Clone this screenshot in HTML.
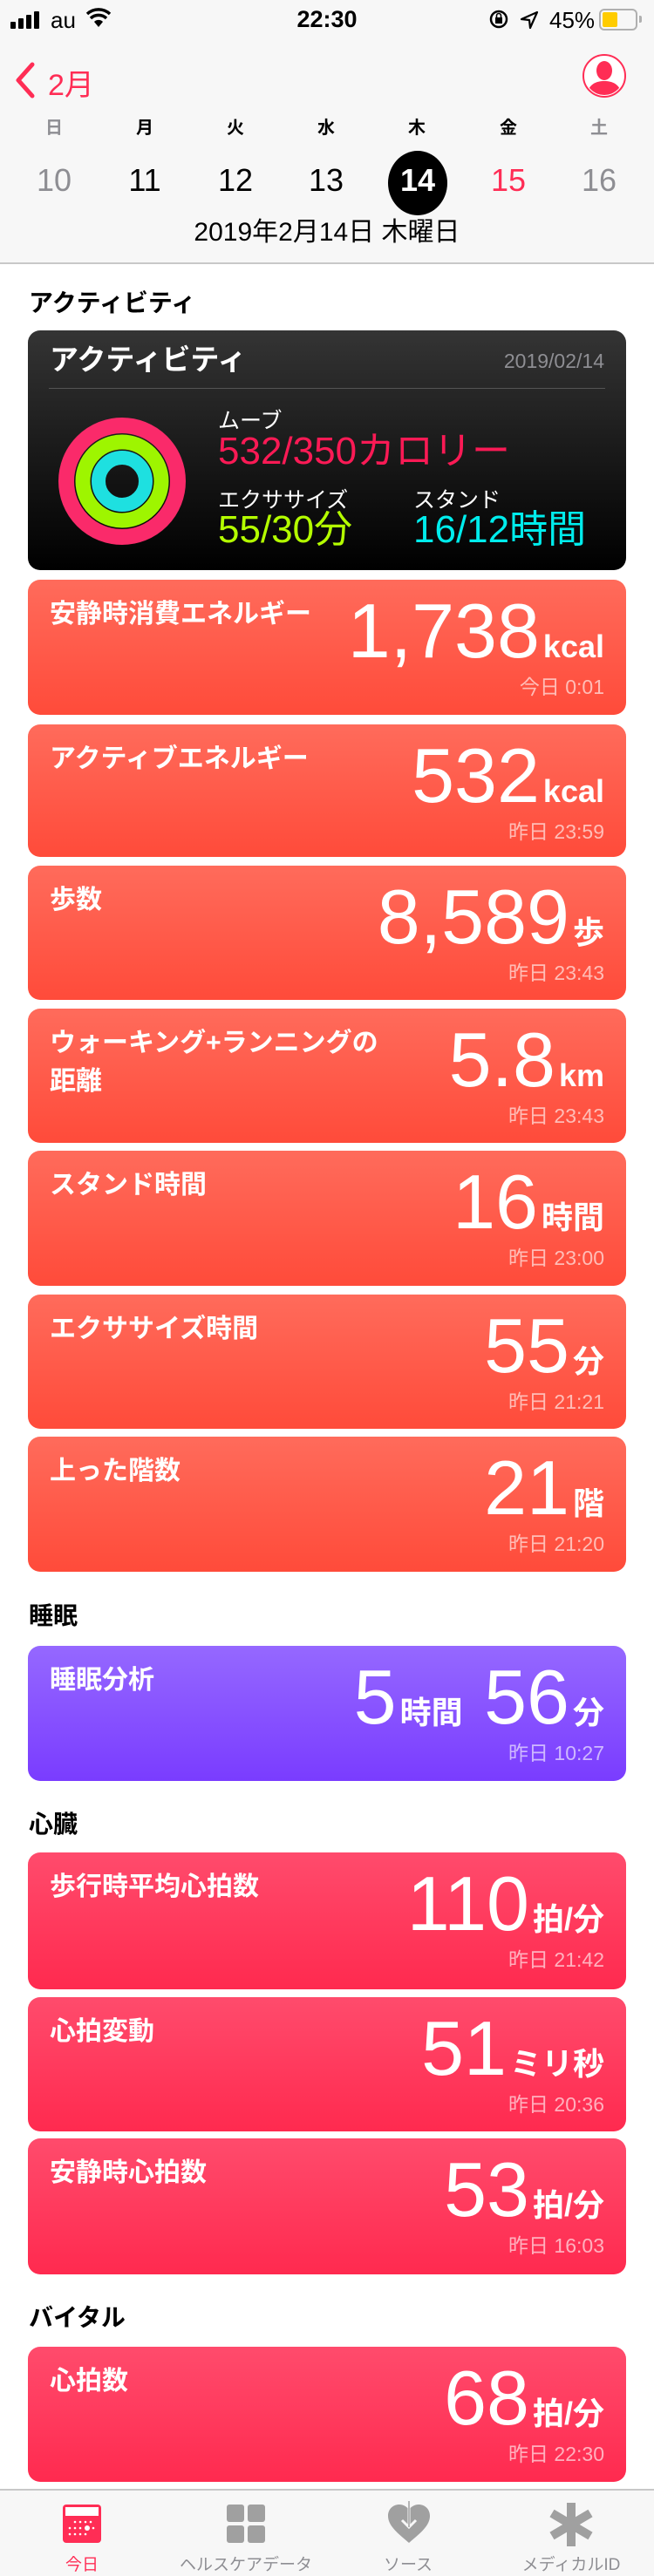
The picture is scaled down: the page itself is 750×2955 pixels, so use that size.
<!DOCTYPE html>
<html><head><meta charset="utf-8">
<style>
*{margin:0;padding:0;box-sizing:border-box}
body{width:750px;height:2955px;background:#fff;font-family:"Liberation Sans","Noto Sans CJK JP",sans-serif;position:relative;overflow:hidden;color:#000}
.abs{position:absolute}
.hdr{position:absolute;left:0;top:0;width:750px;height:303px;background:#f7f7f7;border-bottom:2px solid #c8c8c8}
.wd{position:absolute;top:130px;width:60px;text-align:center;font-size:20px;font-weight:bold;color:#000}
.dt{position:absolute;top:186px;width:70px;text-align:center;font-size:36px;line-height:42px;color:#000}
.sec{position:absolute;left:33px;font-size:28px;font-weight:bold;line-height:32px}
.card{position:absolute;left:32px;width:686px;border-radius:14px;color:#fff;overflow:hidden}
.red{background:linear-gradient(180deg,#ff6b5b,#ff4b3a)}
.pur{background:linear-gradient(180deg,#9568ff,#7a3cff)}
.pink{background:linear-gradient(180deg,#ff4b6c,#ff2a4f)}
.lbl{position:absolute;left:25px;top:18px;font-size:30px;font-weight:bold;line-height:44px;width:420px}
.val{position:absolute;right:25px;top:15px;font-size:88px;line-height:1;white-space:nowrap;font-weight:normal}
.val b{font-size:36px;font-weight:bold;margin-left:4px}
.tm{position:absolute;right:25px;top:109px;font-size:23px;line-height:28px;color:rgba(255,255,255,0.62)}
.tab{position:absolute;top:2855px;left:0;width:750px;height:100px;background:#f7f7f7;border-top:2px solid #c8c8c8}
.tl{position:absolute;top:70px;width:200px;text-align:center;font-size:19px;color:#8e8e93}
</style></head><body>
<div class="hdr">
  <svg class="abs" style="left:12px;top:12px" width="34" height="22"><rect x="0" y="13" width="6" height="8" rx="1"/><rect x="9" y="9" width="6" height="12" rx="1"/><rect x="18" y="5" width="6" height="16" rx="1"/><rect x="27" y="1" width="6" height="20" rx="1"/></svg>
  <div class="abs" style="left:58px;top:8px;font-size:26px">au</div>
  <svg class="abs" style="left:98px;top:9px" width="30" height="24" viewBox="0 0 30 24"><path d="M15 22 L10 16 A7 7 0 0 1 20 16 Z" /><path d="M6 12 A13 13 0 0 1 24 12" stroke="#000" stroke-width="3.5" fill="none"/><path d="M2 7 A19 19 0 0 1 28 7" stroke="#000" stroke-width="3.5" fill="none"/></svg>
  <div class="abs" style="left:0;width:750px;text-align:center;top:7px;font-size:27px;font-weight:bold">22:30</div>
  <svg class="abs" style="left:560px;top:10px" width="24" height="24"><circle cx="12" cy="12" r="9" fill="none" stroke="#000" stroke-width="2.5"/><rect x="8" y="10" width="8" height="7" fill="#000"/><path d="M9.5 10 V8 A2.5 2.5 0 0 1 14.5 8 V10" fill="none" stroke="#000" stroke-width="1.6"/></svg>
  <svg class="abs" style="left:596px;top:12px" width="22" height="22"><path d="M20 2 L2 10 L11 11 L12 20 Z" fill="none" stroke="#000" stroke-width="2.2" stroke-linejoin="round"/></svg>
  <div class="abs" style="left:630px;top:8px;font-size:26px">45%</div>
  <div class="abs" style="left:687px;top:10px;width:44px;height:25px;border:2px solid #b0b0b0;border-radius:6px"><div style="position:absolute;left:2px;top:2px;width:17px;height:17px;background:#ffcc00;border-radius:2px"></div></div>
  <div class="abs" style="left:733px;top:18px;width:3px;height:8px;background:#b0b0b0;border-radius:0 2px 2px 0"></div>
  <svg class="abs" style="left:16px;top:70px" width="26" height="44"><path d="M21 4 L5 22 L21 40" fill="none" stroke="#ff2d55" stroke-width="5" stroke-linecap="round" stroke-linejoin="round"/></svg>
  <div class="abs" style="left:55px;top:70px;font-size:34px;color:#ff2d55">2月</div>
  <svg class="abs" style="left:667px;top:61px" width="52" height="52" viewBox="0 0 52 52"><circle cx="26" cy="26" r="24" fill="#fff" stroke="#ff2d55" stroke-width="2"/><clipPath id="cc"><circle cx="26" cy="26" r="22"/></clipPath><g clip-path="url(#cc)" fill="#ff2d55"><ellipse cx="26" cy="20" rx="9" ry="11"/><path d="M6 52 C6 36 16 32 26 32 C36 32 46 36 46 52 Z"/></g></svg>
  <div class="wd" style="left:32px;color:#8e8e93">日</div>
  <div class="wd" style="left:136px">月</div>
  <div class="wd" style="left:240px">火</div>
  <div class="wd" style="left:344px">水</div>
  <div class="wd" style="left:448px">木</div>
  <div class="wd" style="left:553px">金</div>
  <div class="wd" style="left:657px;color:#8e8e93">土</div>
  <div class="dt" style="left:27px;color:#8e8e93">10</div>
  <div class="dt" style="left:131px">11</div>
  <div class="dt" style="left:235px">12</div>
  <div class="dt" style="left:339px">13</div>
  <div class="abs" style="left:445px;top:173px;width:68px;height:74px;border-radius:50%;background:#000"></div>
  <div class="dt" style="left:444px;color:#fff;font-weight:bold">14</div>
  <div class="dt" style="left:548px;color:#ff2d55">15</div>
  <div class="dt" style="left:652px;color:#8e8e93">16</div>
  <div class="abs" style="left:0;width:750px;text-align:center;top:249px;font-size:30px;line-height:36px">2019年2月14日 木曜日</div>
</div>

<div class="sec" style="top:332px">アクティビティ</div>
<div class="card" style="top:379px;height:275px;background:linear-gradient(180deg,#343434,#000)">
  <div class="abs" style="left:25px;top:14px;font-size:33px;font-weight:bold;line-height:40px">アクティビティ</div>
  <div class="abs" style="right:25px;top:22px;font-size:23px;color:#8e8e93">2019/02/14</div>
  <div class="abs" style="left:24px;top:66px;width:638px;height:1px;background:#555"></div>
  <svg class="abs" style="left:34px;top:99px" width="148" height="148" viewBox="0 0 148 148">
    <circle cx="74" cy="74" r="64" fill="none" stroke="#fa2a6a" stroke-width="18"/>
    <circle cx="74" cy="74" r="45" fill="none" stroke="#9ef500" stroke-width="17"/>
    <circle cx="74" cy="74" r="27" fill="none" stroke="#1ee0e0" stroke-width="16"/>
  </svg>
  <div class="abs" style="left:218px;top:84px;font-size:25px">ムーブ</div>
  <div class="abs" style="left:218px;top:114px;font-size:44px;color:#fa1a55;line-height:50px">532/350カロリー</div>
  <div class="abs" style="left:218px;top:175px;font-size:25px">エクササイズ</div>
  <div class="abs" style="left:442px;top:175px;font-size:25px">スタンド</div>
  <div class="abs" style="left:218px;top:204px;font-size:44px;color:#b4ff00;line-height:50px">55/30分</div>
  <div class="abs" style="left:442px;top:204px;font-size:44px;color:#00ecec;line-height:50px">16/12時間</div>
</div>

<div class="card red" style="top:665px;height:155px"><div class="lbl">安静時消費エネルギー</div><div class="val">1,738<b>kcal</b></div><div class="tm">今日 0:01</div></div>
<div class="card red" style="top:831px;height:152px"><div class="lbl">アクティブエネルギー</div><div class="val">532<b>kcal</b></div><div class="tm">昨日 23:59</div></div>
<div class="card red" style="top:993px;height:154px"><div class="lbl">歩数</div><div class="val">8,589<b>歩</b></div><div class="tm">昨日 23:43</div></div>
<div class="card red" style="top:1157px;height:154px"><div class="lbl" style="width:400px">ウォーキング+ランニングの<br>距離</div><div class="val">5.8<b>km</b></div><div class="tm">昨日 23:43</div></div>
<div class="card red" style="top:1320px;height:155px"><div class="lbl">スタンド時間</div><div class="val">16<b>時間</b></div><div class="tm">昨日 23:00</div></div>
<div class="card red" style="top:1485px;height:154px"><div class="lbl">エクササイズ時間</div><div class="val">55<b>分</b></div><div class="tm">昨日 21:21</div></div>
<div class="card red" style="top:1648px;height:155px"><div class="lbl">上った階数</div><div class="val">21<b>階</b></div><div class="tm">昨日 21:20</div></div>

<div class="sec" style="top:1838px">睡眠</div>
<div class="card pur" style="top:1888px;height:155px"><div class="lbl">睡眠分析</div><div class="val">5<b>時間</b> 56<b>分</b></div><div class="tm">昨日 10:27</div></div>

<div class="sec" style="top:2077px">心臓</div>
<div class="card pink" style="top:2125px;height:157px"><div class="lbl">歩行時平均心拍数</div><div class="val">110<b>拍/分</b></div><div class="tm">昨日 21:42</div></div>
<div class="card pink" style="top:2291px;height:154px"><div class="lbl">心拍変動</div><div class="val">51<b>ミリ秒</b></div><div class="tm">昨日 20:36</div></div>
<div class="card pink" style="top:2453px;height:156px"><div class="lbl">安静時心拍数</div><div class="val">53<b>拍/分</b></div><div class="tm">昨日 16:03</div></div>

<div class="sec" style="top:2643px">バイタル</div>
<div class="card pink" style="top:2692px;height:155px"><div class="lbl">心拍数</div><div class="val">68<b>拍/分</b></div><div class="tm">昨日 22:30</div></div>

<div class="tab">
  <svg class="abs" style="left:72px;top:16px" width="44" height="44" viewBox="0 0 44 44"><rect x="0" y="0" width="44" height="44" rx="4" fill="#ff2d55"/><rect x="3" y="3" width="38" height="10" fill="#fff"/><g fill="#fff"><circle cx="14" cy="20" r="1.3"/><circle cx="20" cy="20" r="1.3"/><circle cx="26" cy="20" r="1.3"/><circle cx="32" cy="20" r="1.3"/><circle cx="8" cy="27" r="1.3"/><circle cx="14" cy="27" r="1.3"/><circle cx="20" cy="27" r="1.3"/><circle cx="28" cy="27" r="3"/><circle cx="35" cy="27" r="1.3"/><circle cx="8" cy="34" r="1.3"/><circle cx="14" cy="34" r="1.3"/><circle cx="20" cy="34" r="1.3"/><circle cx="26" cy="34" r="1.3"/></g></svg>
  <div class="tl" style="left:-6px;color:#ff2d55">今日</div>
  <svg class="abs" style="left:260px;top:16px" width="44" height="44"><g fill="#a0a0a0"><rect x="0" y="0" width="20" height="20" rx="3"/><rect x="24" y="0" width="20" height="20" rx="3"/><rect x="0" y="24" width="20" height="20" rx="3"/><rect x="24" y="24" width="20" height="20" rx="3"/></g></svg>
  <div class="tl" style="left:182px">ヘルスケアデータ</div>
  <svg class="abs" style="left:443px;top:12px" width="52" height="50" viewBox="0 0 52 50"><path d="M26 48 C12 36 2 28 2 17 C2 9 8 4 15 4 C20 4 24 7 26 10 C28 7 32 4 37 4 C44 4 50 9 50 17 C50 28 40 36 26 48 Z" fill="#a0a0a0"/><path d="M26 0 V30 M18 22 L26 30 L34 22" fill="none" stroke="#f7f7f7" stroke-width="3"/><path d="M26 0 V30" stroke="#a0a0a0" stroke-width="1.5"/></svg>
  <div class="tl" style="left:368px">ソース</div>
  <svg class="abs" style="left:630px;top:14px" width="50" height="50" viewBox="0 0 50 50"><g stroke="#a0a0a0" stroke-width="10" stroke-linecap="butt"><line x1="25" y1="0" x2="25" y2="50"/><line x1="3" y1="12" x2="47" y2="38"/><line x1="3" y1="38" x2="47" y2="12"/></g></svg>
  <div class="tl" style="left:555px">メディカルID</div>
</div>
</body></html>
